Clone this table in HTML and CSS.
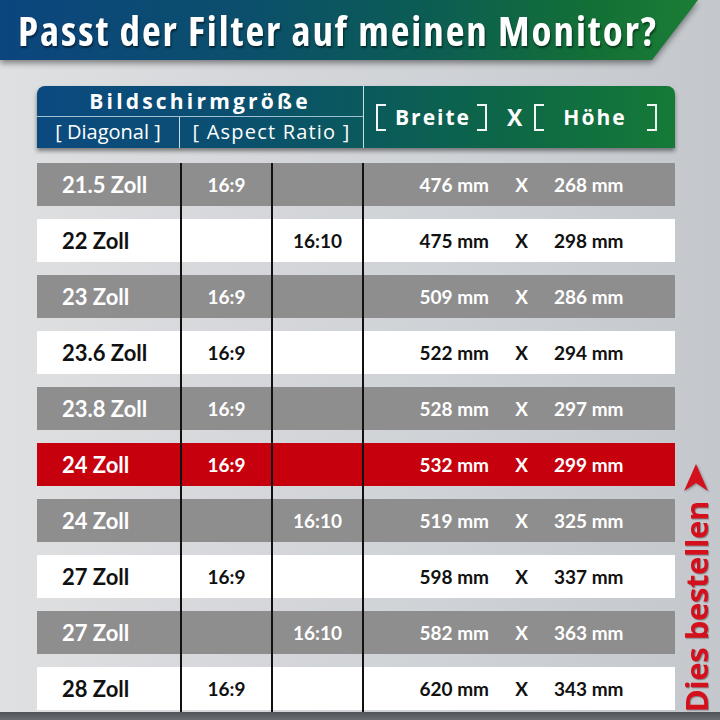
FILE: index.html
```html
<!DOCTYPE html>
<html lang="de">
<head>
<meta charset="utf-8">
<title>Passt der Filter auf meinen Monitor?</title>
<link rel="stylesheet" href="styles.css">
</head>
<body>
<div class="page">
  <div class="banner-wrap">
    <header class="banner"><h1 class="title">Passt der Filter auf meinen Monitor?</h1></header>
  </div>
  <main class="content">
    <div class="table">
      <div class="thead">
        <div class="th-title">Bildschirmgröße</div>
        <div class="th-diag">[ Diagonal ]</div>
        <div class="th-aspect">[ Aspect Ratio ]</div>
        <div class="th-size">
          <span class="br br-l"></span><span class="th-word">Breite</span><span class="br br-r"></span>
          <span class="th-x">X</span>
          <span class="br br-l"></span><span class="th-word th-word-h">Höhe</span><span class="br br-r"></span>
        </div>
      </div>
      <div class="tbody">
        <div class="row row-gray"><div class="c-diag">21.5 Zoll</div><div class="c-ar">16:9</div><div class="c-ar"></div><div class="c-size"><span class="w">476 mm</span><span class="x">X</span><span class="h">268 mm</span></div></div>
        <div class="row row-white"><div class="c-diag">22 Zoll</div><div class="c-ar"></div><div class="c-ar">16:10</div><div class="c-size"><span class="w">475 mm</span><span class="x">X</span><span class="h">298 mm</span></div></div>
        <div class="row row-gray"><div class="c-diag">23 Zoll</div><div class="c-ar">16:9</div><div class="c-ar"></div><div class="c-size"><span class="w">509 mm</span><span class="x">X</span><span class="h">286 mm</span></div></div>
        <div class="row row-white"><div class="c-diag">23.6 Zoll</div><div class="c-ar">16:9</div><div class="c-ar"></div><div class="c-size"><span class="w">522 mm</span><span class="x">X</span><span class="h">294 mm</span></div></div>
        <div class="row row-gray"><div class="c-diag">23.8 Zoll</div><div class="c-ar">16:9</div><div class="c-ar"></div><div class="c-size"><span class="w">528 mm</span><span class="x">X</span><span class="h">297 mm</span></div></div>
        <div class="row row-red"><div class="c-diag">24 Zoll</div><div class="c-ar">16:9</div><div class="c-ar"></div><div class="c-size"><span class="w">532 mm</span><span class="x">X</span><span class="h">299 mm</span></div></div>
        <div class="row row-gray"><div class="c-diag">24 Zoll</div><div class="c-ar"></div><div class="c-ar">16:10</div><div class="c-size"><span class="w">519 mm</span><span class="x">X</span><span class="h">325 mm</span></div></div>
        <div class="row row-white"><div class="c-diag">27 Zoll</div><div class="c-ar">16:9</div><div class="c-ar"></div><div class="c-size"><span class="w">598 mm</span><span class="x">X</span><span class="h">337 mm</span></div></div>
        <div class="row row-gray"><div class="c-diag">27 Zoll</div><div class="c-ar"></div><div class="c-ar">16:10</div><div class="c-size"><span class="w">582 mm</span><span class="x">X</span><span class="h">363 mm</span></div></div>
        <div class="row row-white"><div class="c-diag">28 Zoll</div><div class="c-ar">16:9</div><div class="c-ar"></div><div class="c-size"><span class="w">620 mm</span><span class="x">X</span><span class="h">343 mm</span></div></div>
      </div>
    </div>
    <aside class="order">
      <svg class="order-arrow" width="24" height="28" viewBox="0 0 24 28"><polygon points="12,0 24,27 12,19 0,27" fill="#d4101c"/></svg>
      <span class="order-text">Dies bestellen</span>
    </aside>
  </main>
  <div class="footer-bar"></div>
</div>
</body>
</html>
```
FILE: styles.css
```css
* { box-sizing: border-box; }
html, body { margin: 0; padding: 0; }
body {
  width: 720px;
  height: 720px;
  overflow: hidden;
  font-family: "Open Sans", "Liberation Sans", sans-serif;
  background: linear-gradient(to right, #dfe0e2 0%, #d6d8db 30%, #cfd2d6 60%, #c4c8cd 100%);
}
.page {
  height: 720px;
  display: flex;
  flex-direction: column;
}
.banner-wrap {
  flex: none;
  filter: drop-shadow(0 3px 3px rgba(0,0,0,0.45));
}
.banner {
  width: 698px;
  height: 60px;
  clip-path: polygon(0 0, 100% 0, calc(100% - 46px) 100%, 0 100%);
  background: linear-gradient(to right, #0c457f 0%, #0b4f6c 35%, #0b5c55 60%, #137036 85%, #1b7d36 100%);
  display: flex;
  align-items: center;
}
.title {
  margin: 0 0 0 18px;
  color: #fff;
  font-family: "Open Sans", sans-serif;
  font-weight: 700;
  font-size: 41px;
  font-stretch: 87.5%;
  letter-spacing: 1.9px;
  text-shadow: 1px 2px 2px rgba(0,0,0,0.5);
  white-space: nowrap;
}
.content {
  flex: 1;
  display: flex;
  padding-left: 37px;
  padding-top: 26px;
}
.table {
  width: 638px;
  display: flex;
  flex-direction: column;
}
.thead {
  height: 62px;
  flex: none;
  display: grid;
  grid-template-columns: 143px 183px 1fr;
  grid-template-rows: 31px 31px;
  border-radius: 8px 8px 0 0;
  background: linear-gradient(to right, #0b4a80 0%, #0b4f70 30%, #0a5a5c 52%, #0d6648 72%, #157a36 100%);
  box-shadow: 0 3px 4px rgba(0,0,0,0.45);
  color: #fff;
  margin-bottom: 15px;
}
.th-title {
  grid-column: 1 / 3;
  grid-row: 1;
  border-bottom: 1px solid #9fc0d0;
  text-align: center;
  font-weight: 700;
  font-size: 21px;
  letter-spacing: 3.2px;
  line-height: 30px;
}
.th-diag, .th-aspect {
  grid-row: 2;
  text-align: center;
  font-size: 20px;
  line-height: 30px;
}
.th-diag { grid-column: 1; border-right: 1px solid #c8dce6; letter-spacing: 0px; }
.th-aspect { grid-column: 2; letter-spacing: 1.2px; }
.th-size {
  grid-column: 3;
  grid-row: 1 / 3;
  border-left: 1px solid #c8dce6;
  display: flex;
  align-items: center;
  padding-left: 12px;
}
.br {
  display: block;
  width: 10px;
  height: 27px;
  border: 2px solid #f2f6f4;
  margin-top: 1px;
}
.br-l { border-right: none; }
.br-r { border-left: none; }
.th-word {
  font-weight: 700;
  font-size: 21px;
  letter-spacing: 2px;
  margin: 0 6px 0 9px;
}
.th-word-h { margin: 0 20px 0 19px; }
.th-x {
  font-weight: 700;
  font-size: 23px;
  margin: 0 12px 0 20px;
}
.tbody {
  flex: 1;
  display: flex;
  flex-direction: column;
  gap: 13px;
  background:
    linear-gradient(#111, #111) 143px 0 / 2px 100% no-repeat,
    linear-gradient(#111, #111) 234px 0 / 2px 100% no-repeat,
    linear-gradient(#111, #111) 325px 0 / 2px 100% no-repeat;
}
.row {
  height: 43px;
  flex: none;
  display: grid;
  grid-template-columns: 145px 91px 91px 1fr;
  font-family: "Lato", "DejaVu Sans", sans-serif;
  font-weight: 700;
}
.row > div {
  display: flex;
  align-items: center;
}
.row-gray { background: #8e8e8e; color: #fff; }
.row-white { background: #ffffff; color: #111; }
.row-red { background: #c6000d; color: #fff; }
.c-diag {
  padding-left: 25px;
  font-size: 22px;
  border-right: 2px solid #111;
}
.c-ar {
  justify-content: center;
  font-size: 19px;
  border-right: 2px solid #111;
}
.c-size { font-size: 19px; }
.c-size .w { width: 125px; text-align: right; }
.c-size .x { width: 65px; text-align: center; }
.c-size .h { text-align: left; }
.order {
  width: 45px;
  display: flex;
  flex-direction: column;
  justify-content: flex-end;
  align-items: center;
  padding-bottom: 0;
  padding-right: 4px;
}
.order-arrow {
  display: block;
  margin-bottom: 9px;
  filter: drop-shadow(1px 1px 1px rgba(0,0,0,0.35));
}
.order-text {
  writing-mode: vertical-rl;
  transform: rotate(180deg);
  font-family: "Open Sans", sans-serif;
  font-weight: 700;
  font-size: 31px;
  line-height: 32px;
  color: #d4101c;
  letter-spacing: -0.4px;
  text-shadow: -1px 1px 1px rgba(0,0,0,0.35);
  white-space: nowrap;
}
.footer-bar {
  flex: none;
  height: 8px;
  background: linear-gradient(#505458, #6a6e72);
}
```
